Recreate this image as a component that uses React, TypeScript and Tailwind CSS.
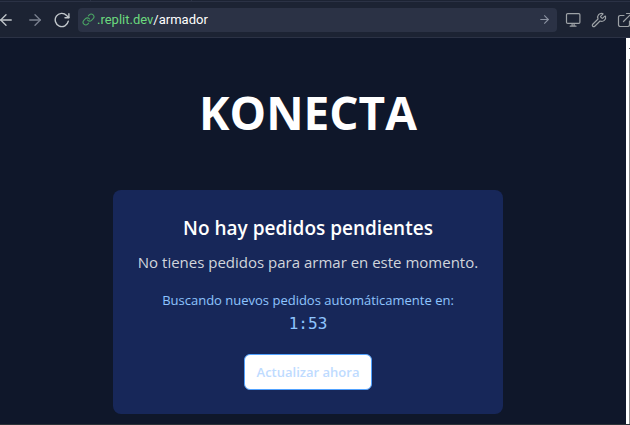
import { ArrowLeft, ArrowRight, Link, Wrench } from "lucide-react";

function ReloadIcon() {
  return (
    <svg width="16" height="16" viewBox="0 0 16 16" fill="none" stroke="currentColor" strokeWidth="1.4" strokeLinecap="round" strokeLinejoin="round" aria-hidden="true">
      <path d="M14.3 9.2A6.6 6.6 0 1 1 12.6 3.4L14.8 5.6" />
      <path d="M14.9 1.8V5.7H11" />
    </svg>
  );
}

function MonitorIcon() {
  return (
    <svg width="16" height="16" viewBox="0 0 16 16" fill="none" stroke="currentColor" strokeWidth="1.2" strokeLinecap="round" strokeLinejoin="round" aria-hidden="true">
      <rect x="1.5" y="1.6" width="13.4" height="9.8" rx="1.2" />
      <path d="M7.1 11.5V14M9.1 11.5V14M5.2 14.2H11" />
    </svg>
  );
}

function OpenIcon() {
  return (
    <svg width="16" height="16" viewBox="0 0 16 16" fill="none" stroke="currentColor" strokeWidth="1.2" strokeLinecap="round" strokeLinejoin="round" aria-hidden="true">
      <path d="M7 3.5H3.2A1.7 1.7 0 0 0 1.5 5.2V12.8A1.7 1.7 0 0 0 3.2 14.5H10.8A1.7 1.7 0 0 0 12.5 12.8V9" />
      <path d="M9.5 1.5H14.5V6.5M14.5 1.5L6.5 9.5" />
    </svg>
  );
}

function BrowserBar() {
  return (
    <header className="shrink-0 bg-[#1c2333]">
      <div className="flex h-0.5 border-b border-[#2b3245] bg-[#0e1525]">
        <div className="w-[90px] bg-[#1c2333]" />
        <div className="w-[102px] border-x border-[#2b3245] bg-[#1c2333]" />
        <div className="flex-1 bg-[#1c2333]" />
      </div>
      <nav className="flex h-9 items-center overflow-hidden border-b border-[#2b3245] font-[Roboto,'Liberation_Sans',sans-serif]">
        <div className="flex w-[78px] shrink-0 items-center justify-between pr-2 text-[#c2c8cc]">
          <button type="button" aria-label="Atrás" className="-ml-[3px]">
            <ArrowLeft size={18} strokeWidth={1.75} />
          </button>
          <button type="button" aria-label="Adelante" className="text-[#7b8290]">
            <ArrowRight size={18} strokeWidth={1.75} />
          </button>
          <button type="button" aria-label="Recargar">
            <ReloadIcon />
          </button>
        </div>
        <div className="flex h-6 min-w-0 flex-1 items-center rounded bg-[#2b3245] pr-1.5 pl-1">
          <Link size={13} strokeWidth={2} className="shrink-0 text-[#4aa564]" />
          <a href="/armador" className="ml-0.5 flex-1 text-[13px] leading-4 text-white">
            <span className="text-[#6bd97e]">.replit.dev</span>/armador
          </a>
          <button type="button" aria-label="Ir" className="text-[#8a91a0]">
            <ArrowRight size={13} strokeWidth={2} />
          </button>
        </div>
        <div className="-mr-[3px] flex shrink-0 items-center gap-2.5 pl-2 text-[#9da2a6]">
          <button type="button" aria-label="Dispositivos">
            <MonitorIcon />
          </button>
          <button type="button" aria-label="Herramientas">
            <Wrench size={16} strokeWidth={1.75} />
          </button>
          <button type="button" aria-label="Abrir en otra pestaña">
            <OpenIcon />
          </button>
        </div>
      </nav>
    </header>
  );
}

export default function App() {
  return (
    <div className="flex min-h-screen flex-col bg-[#0f172a] font-['Open_Sans','Noto_Sans',sans-serif]">
      <BrowserBar />
      <div className="flex flex-1">
        <main className="flex flex-1 flex-col items-center border-b border-[#2b3238] pt-[50px] pr-2.5 pb-2.5 text-center">
          <h1 className="text-[46px] leading-[48px] font-bold text-white">KONECTA</h1>
          <section className="mt-[54px] w-full max-w-[390px] rounded-lg bg-[#172759] py-6">
            <h2 className="text-[19px] leading-7 font-semibold text-white">No hay pedidos pendientes</h2>
            <p className="mt-2 text-[15px] leading-6 text-gray-300">
              No tienes pedidos para armar en este momento.
            </p>
            <p className="mt-4 text-[13px] leading-5 text-blue-300">
              Buscando nuevos pedidos automáticamente en:
            </p>
            <p className="font-['DejaVu_Sans_Mono',monospace] text-[16px] leading-7 text-blue-300">1:53</p>
            <button
              type="button"
              className="mt-4 h-9 rounded-md border border-blue-400 bg-white px-3 text-[13px] leading-5 font-semibold text-blue-200"
            >
              Actualizar ahora
            </button>
          </section>
        </main>
        <div className="flex w-1 flex-col border-b border-[#2b3238] bg-white">
          <div className="mt-2.5 ml-auto h-px w-px bg-[#555]" />
          <div className="mt-2.5 ml-auto w-px flex-1 bg-[#8b8b8b]" />
        </div>
      </div>
    </div>
  );
}
